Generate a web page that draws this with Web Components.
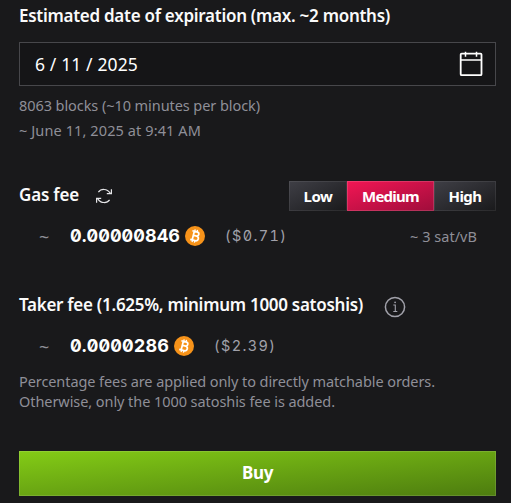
<!DOCTYPE html>
<html lang="en">
<head>
<meta charset="utf-8">
<title>Buy order</title>
<style>
  html, body {
    margin: 0;
    background: #19191b;
  }
</style>
</head>
<body>
<order-form></order-form>
<script>
/** Creates the shadow root of an element and fills it with markup. */
function render(el, html) {
  const tmpl = document.createElement('template');
  tmpl.innerHTML = html;
  el.attachShadow({mode: 'open'}).appendChild(tmpl.content.cloneNode(true));
}

// A single line of text, tracked so that it takes up `width` pixels.
class FitText extends HTMLElement {
  constructor() {
    super();
    render(this, `
      <style>
        :host { display: block; white-space: nowrap; flex: none; }
        span { display: inline-block; vertical-align: top; }
      </style><span><slot></slot></span>`);
  }

  connectedCallback() {
    const width = parseFloat(this.getAttribute('width'));
    const span = this.shadowRoot.querySelector('span');
    const natural = span.getBoundingClientRect().width;
    span.style.letterSpacing = `${(width - natural) / this.textContent.length}px`;
    this.style.width = `${width}px`;
  }
}

const icons = {
  calendar: `
    <svg width="26" height="26" viewBox="0 0 26 26" fill="none" stroke="#fff">
      <rect x="2.7" y="2.6" width="20.8" height="21.6" rx="1" stroke-width="1.8"/>
      <path d="M2.5 8.9h21M7.5.7v5M18.5.7v5" stroke-width="1.5"/>
    </svg>`,
  refresh: `
    <svg width="16" height="16" viewBox="0 0 16 16" fill="none" stroke="#e4e4e7" stroke-width="1.2">
      <path d="M2.4 4.2C5 .5 11 .3 14.2 5.2M15.4 1.2v4.4h-4.6"/>
      <path d="M13.6 11.8C11 15.5 5 15.7 1.8 10.8M.6 14.8v-4.4h4.6"/>
    </svg>`,
  info: `
    <svg width="22" height="22" viewBox="0 0 22 22" fill="none" stroke="#a1a1aa">
      <circle cx="11" cy="11" r="9.6" stroke-width="1.5"/>
      <path d="M9.3 9h2v6.5M9.3 15.5h4" stroke-width="1.1"/>
      <circle cx="11.1" cy="6.3" r=".9" fill="#a1a1aa" stroke="none"/>
    </svg>`,
  bitcoin: `
    <svg width="20" height="20" viewBox="0 0 20 20" fill="none">
      <circle cx="10" cy="10" r="10" fill="#f7931a"/>
      <g transform="rotate(14 10 10)" stroke="#fff">
        <path d="M6.2 5.5h4.6c3.3 0 3.3 4.2 0 4.2H8.2h3c3.6 0 3.6 4.8 0 4.8H6.2M8.2 5.5v9" stroke-width="1.7"/>
        <path d="M8.6 3.5v2M11 3.5v2M8.6 14.5v2M11 14.5v2" stroke-width="1.3"/>
      </g>
    </svg>`,
};

class UiIcon extends HTMLElement {
  constructor() {
    super();
    render(this, `
      <style>
        :host { display: inline-flex; flex: none; }
        svg { display: block; }
      </style>`);
  }

  connectedCallback() {
    this.shadowRoot.innerHTML += icons[this.getAttribute('name')];
  }
}

class DateField extends HTMLElement {
  constructor() {
    super();
    render(this, `
      <style>
        :host {
          display: flex;
          align-items: center;
          justify-content: space-between;
          box-sizing: border-box;
          height: 44px;
          padding: 0 11px 0 15px;
          border: 1px solid #47474b;
          background: #151517;
          color: #fff;
          font-size: 17.5px;
        }
      </style>
      <slot></slot>
      <ui-icon name="calendar"></ui-icon>`);
  }
}

class FeePicker extends HTMLElement {
  constructor() {
    super();
    render(this, `
      <style>
        :host { display: grid; grid-template-columns: 58px 87px 62px; height: 30px; }
        div {
          display: flex;
          align-items: center;
          justify-content: center;
          box-sizing: border-box;
          padding-bottom: 1px;
          border: 1px solid rgba(255, 255, 255, .08);
          background: linear-gradient(to bottom right, #3f3f46, #19191b) border-box;
          color: #fff;
          font-size: 15px;
          font-weight: 700;
          line-height: 26px;
        }
        .selected {
          border-color: rgba(255, 255, 255, .15);
          background: linear-gradient(to bottom right, #f31654, #9f0d3b) border-box;
        }
      </style>
      <div><fit-text width="29">Low</fit-text></div>
      <div class="selected"><fit-text width="57">Medium</fit-text></div>
      <div><fit-text width="33">High</fit-text></div>`);
  }
}

// Approximate fee in bitcoin with its price in dollars.
class FeeAmount extends HTMLElement {
  constructor() {
    super();
    const btc = this.getAttribute('btc');
    const usd = `(${this.getAttribute('usd')})`;
    render(this, `
      <style>
        :host { display: flex; align-items: center; height: 24px; padding: 0 19px 0 20px; font-size: 14.5px; }
        .approx { width: 31px; padding-top: 1px; font-size: 18px; }
        .btc, .usd { font-family: Inter, sans-serif; font-feature-settings: 'zero', 'tnum'; }
        .btc { color: #fff; font-size: 18px; font-weight: 700; }
        .usd { color: #a1a1aa; font-size: 14.5px; }
        ui-icon { margin: 0 20px 0 5px; }
        .extra { margin-left: auto; }
      </style>
      <span class="approx">~</span>
      <fit-text class="btc" width="${btc.length * 11}">${btc}</fit-text>
      <ui-icon name="bitcoin"></ui-icon>
      <fit-text class="usd" width="${usd.length * 8.9}">${usd}</fit-text>
      <span class="extra"><slot></slot></span>`);
  }
}

class BuyButton extends HTMLElement {
  constructor() {
    super();
    render(this, `
      <style>
        :host {
          display: flex;
          align-items: center;
          justify-content: center;
          box-sizing: border-box;
          height: 45px;
          padding-bottom: 2px;
          border: 1px solid rgba(255, 255, 255, .12);
          background: linear-gradient(to bottom right, #84cc16, #4d7c0f) border-box;
          color: #fff;
          font-size: 17px;
          font-weight: 700;
        }
      </style>
      <slot></slot>`);
  }
}

class OrderForm extends HTMLElement {
  constructor() {
    super();
    render(this, `
      <style>
        :host {
          display: flex;
          flex-direction: column;
          box-sizing: border-box;
          width: 511px;
          height: 503px;
          padding: 4px 15px 7px 19px;
          overflow: hidden;
          background: #19191b;
          color: #8f8f98;
          font: 14.5px/24px 'Noto Sans', sans-serif;
        }
        .title { color: #fafafa; font-size: 17px; font-weight: 600; }
        .row { display: flex; align-items: center; }
        date-field { margin: 14px 0 7px; }
        .hints { line-height: 25px; }
        .gas { margin-top: 38px; height: 30px; gap: 17px; }
        .gas .title { padding-bottom: 2px; }
        fee-picker { margin-left: auto; }
        .gas-amount { margin-top: 13px; }
        .taker { margin-top: 45px; height: 24px; gap: 21px; }
        .taker ui-icon { margin-top: 4px; }
        .taker-amount { margin-top: 17px; }
        .note { margin-top: 13px; line-height: 20px; }
        buy-button { margin-top: auto; }
      </style>
      <fit-text class="title" width="371">Estimated date of expiration (max. ~2 months)</fit-text>
      <date-field><fit-text width="103">6 / 11 / 2025</fit-text></date-field>
      <div class="hints">
        <fit-text width="241">8063 blocks (~10 minutes per block)</fit-text>
        <fit-text width="182">~ June 11, 2025 at 9:41 AM</fit-text>
      </div>
      <div class="row gas">
        <fit-text class="title" width="60">Gas fee</fit-text>
        <ui-icon name="refresh"></ui-icon>
        <fee-picker></fee-picker>
      </div>
      <fee-amount class="gas-amount" btc="0.00000846" usd="$0.71"><fit-text width="67">~ 3 sat/vB</fit-text></fee-amount>
      <div class="row taker">
        <fit-text class="title" width="344">Taker fee (1.625%, minimum 1000 satoshis)</fit-text>
        <ui-icon name="info"></ui-icon>
      </div>
      <fee-amount class="taker-amount" btc="0.0000286" usd="$2.39"></fee-amount>
      <div class="note">
        <fit-text width="416">Percentage fees are applied only to directly matchable orders.</fit-text>
        <fit-text width="316">Otherwise, only the 1000 satoshis fee is added.</fit-text>
      </div>
      <buy-button><fit-text width="31">Buy</fit-text></buy-button>`);
  }
}

customElements.define('fit-text', FitText);
customElements.define('ui-icon', UiIcon);
customElements.define('date-field', DateField);
customElements.define('fee-picker', FeePicker);
customElements.define('fee-amount', FeeAmount);
customElements.define('buy-button', BuyButton);
customElements.define('order-form', OrderForm);
</script>
</body>
</html>
